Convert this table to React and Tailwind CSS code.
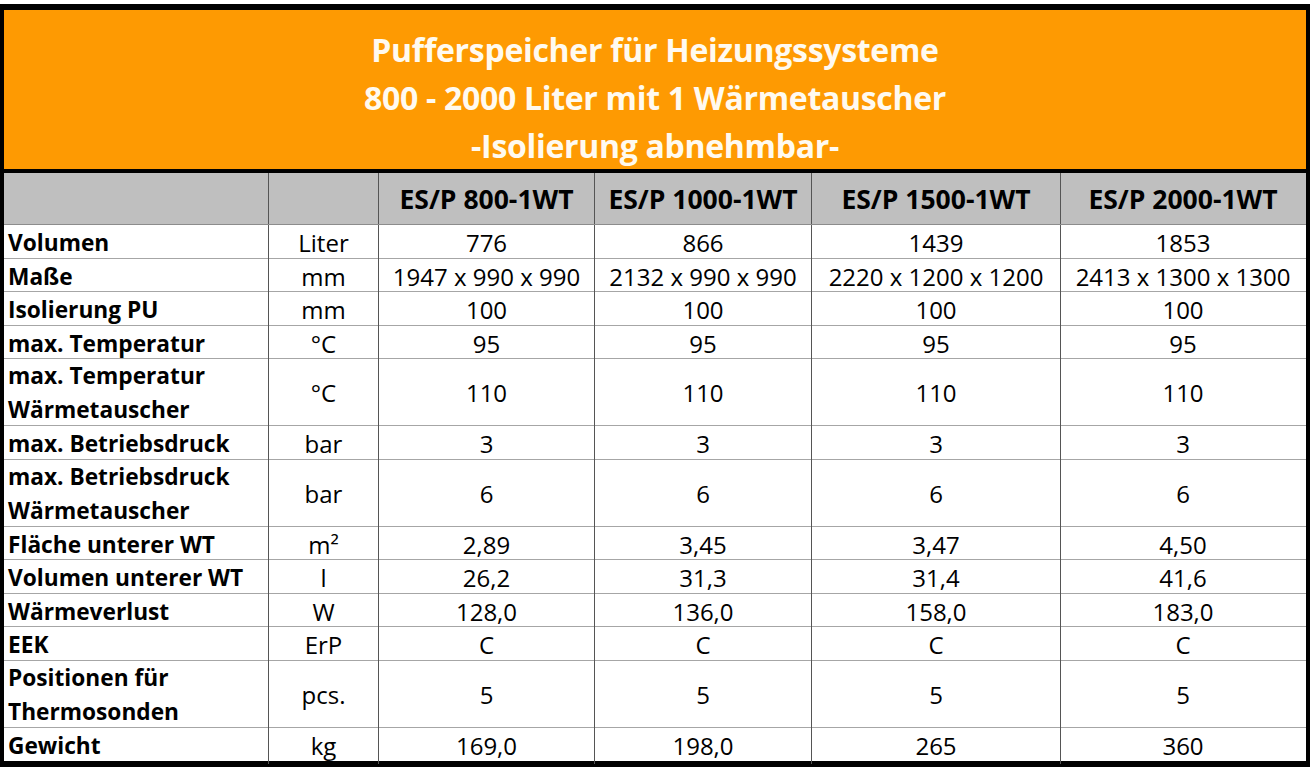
import React from 'react';

const cols = 'grid grid-cols-[265px_110px_216px_217px_249px_244px]';

const rows = [
  { label: ['Volumen'], unit: 'Liter', values: ['776', '866', '1439', '1853'] },
  { label: ['Maße'], unit: 'mm', values: ['1947 x 990 x 990', '2132 x 990 x 990', '2220 x 1200 x 1200', '2413 x 1300 x 1300'] },
  { label: ['Isolierung PU'], unit: 'mm', values: ['100', '100', '100', '100'] },
  { label: ['max. Temperatur'], unit: '°C', values: ['95', '95', '95', '95'] },
  { label: ['max. Temperatur', 'Wärmetauscher'], unit: '°C', values: ['110', '110', '110', '110'] },
  { label: ['max. Betriebsdruck'], unit: 'bar', values: ['3', '3', '3', '3'] },
  { label: ['max. Betriebsdruck', 'Wärmetauscher'], unit: 'bar', values: ['6', '6', '6', '6'] },
  { label: ['Fläche unterer WT'], unit: 'm²', values: ['2,89', '3,45', '3,47', '4,50'] },
  { label: ['Volumen unterer WT'], unit: 'l', values: ['26,2', '31,3', '31,4', '41,6'] },
  { label: ['Wärmeverlust'], unit: 'W', values: ['128,0', '136,0', '158,0', '183,0'] },
  { label: ['EEK'], unit: 'ErP', values: ['C', 'C', 'C', 'C'] },
  { label: ['Positionen für', 'Thermosonden'], unit: 'pcs.', values: ['5', '5', '5', '5'] },
  { label: ['Gewicht'], unit: 'kg', values: ['169,0', '198,0', '265', '360'] },
];

const models = ['ES/P 800-1WT', 'ES/P 1000-1WT', 'ES/P 1500-1WT', 'ES/P 2000-1WT'];

export default function App() {
  return (
    <div className="w-[1312px] h-[770px] bg-white pt-[4px] font-['Open_Sans',sans-serif] text-black">
      <div className="w-[1310px] border-x-[4px] border-t-[6px] border-b-[6px] border-black bg-white">
        {/* Titel */}
        <div className="h-[159px] bg-[#fe9a02] flex flex-col items-center pt-[16px] text-[#fffaf0] font-bold text-[32px] leading-[48px] tracking-[-0.3px]">
          <div>Pufferspeicher für Heizungssysteme</div>
          <div>800 - 2000 Liter mit 1 Wärmetauscher</div>
          <div>-Isolierung abnehmbar-</div>
        </div>
        <div className="h-[4px] bg-black" />

        {/* Kopfzeile */}
        <div className={`${cols} h-[52px] bg-[#bfbfbf] border-b border-[#8c8c8c]`}>
          <div className="border-r border-[#555]" />
          <div className="border-r border-[#555]" />
          {models.map((m, i) => (
            <div
              key={m}
              className={`flex items-center justify-center font-bold text-[26.5px] pt-[2px] ${i < 3 ? 'border-r border-[#555]' : ''}`}
            >
              {m}
            </div>
          ))}
        </div>

        {/* Daten */}
        {rows.map((r, idx) => (
          <div
            key={idx}
            className={`${cols} ${r.label.length > 1 ? 'h-[67px]' : 'h-[33.5px]'} ${idx < rows.length - 1 ? 'border-b border-[#a6a6a6]' : ''} text-[24px]`}
          >
            <div className="border-r border-[#555] flex flex-col justify-center pl-[4px] font-bold text-[22.7px] leading-[34px]">
              {r.label.map((l) => (
                <div key={l}>{l}</div>
              ))}
            </div>
            <div className="border-r border-[#555] flex items-center justify-center">{r.unit}</div>
            {r.values.map((v, i) => (
              <div
                key={i}
                className={`flex items-center justify-center ${i < 3 ? 'border-r border-[#555]' : ''}`}
              >
                {v}
              </div>
            ))}
          </div>
        ))}
      </div>
    </div>
  );
}
